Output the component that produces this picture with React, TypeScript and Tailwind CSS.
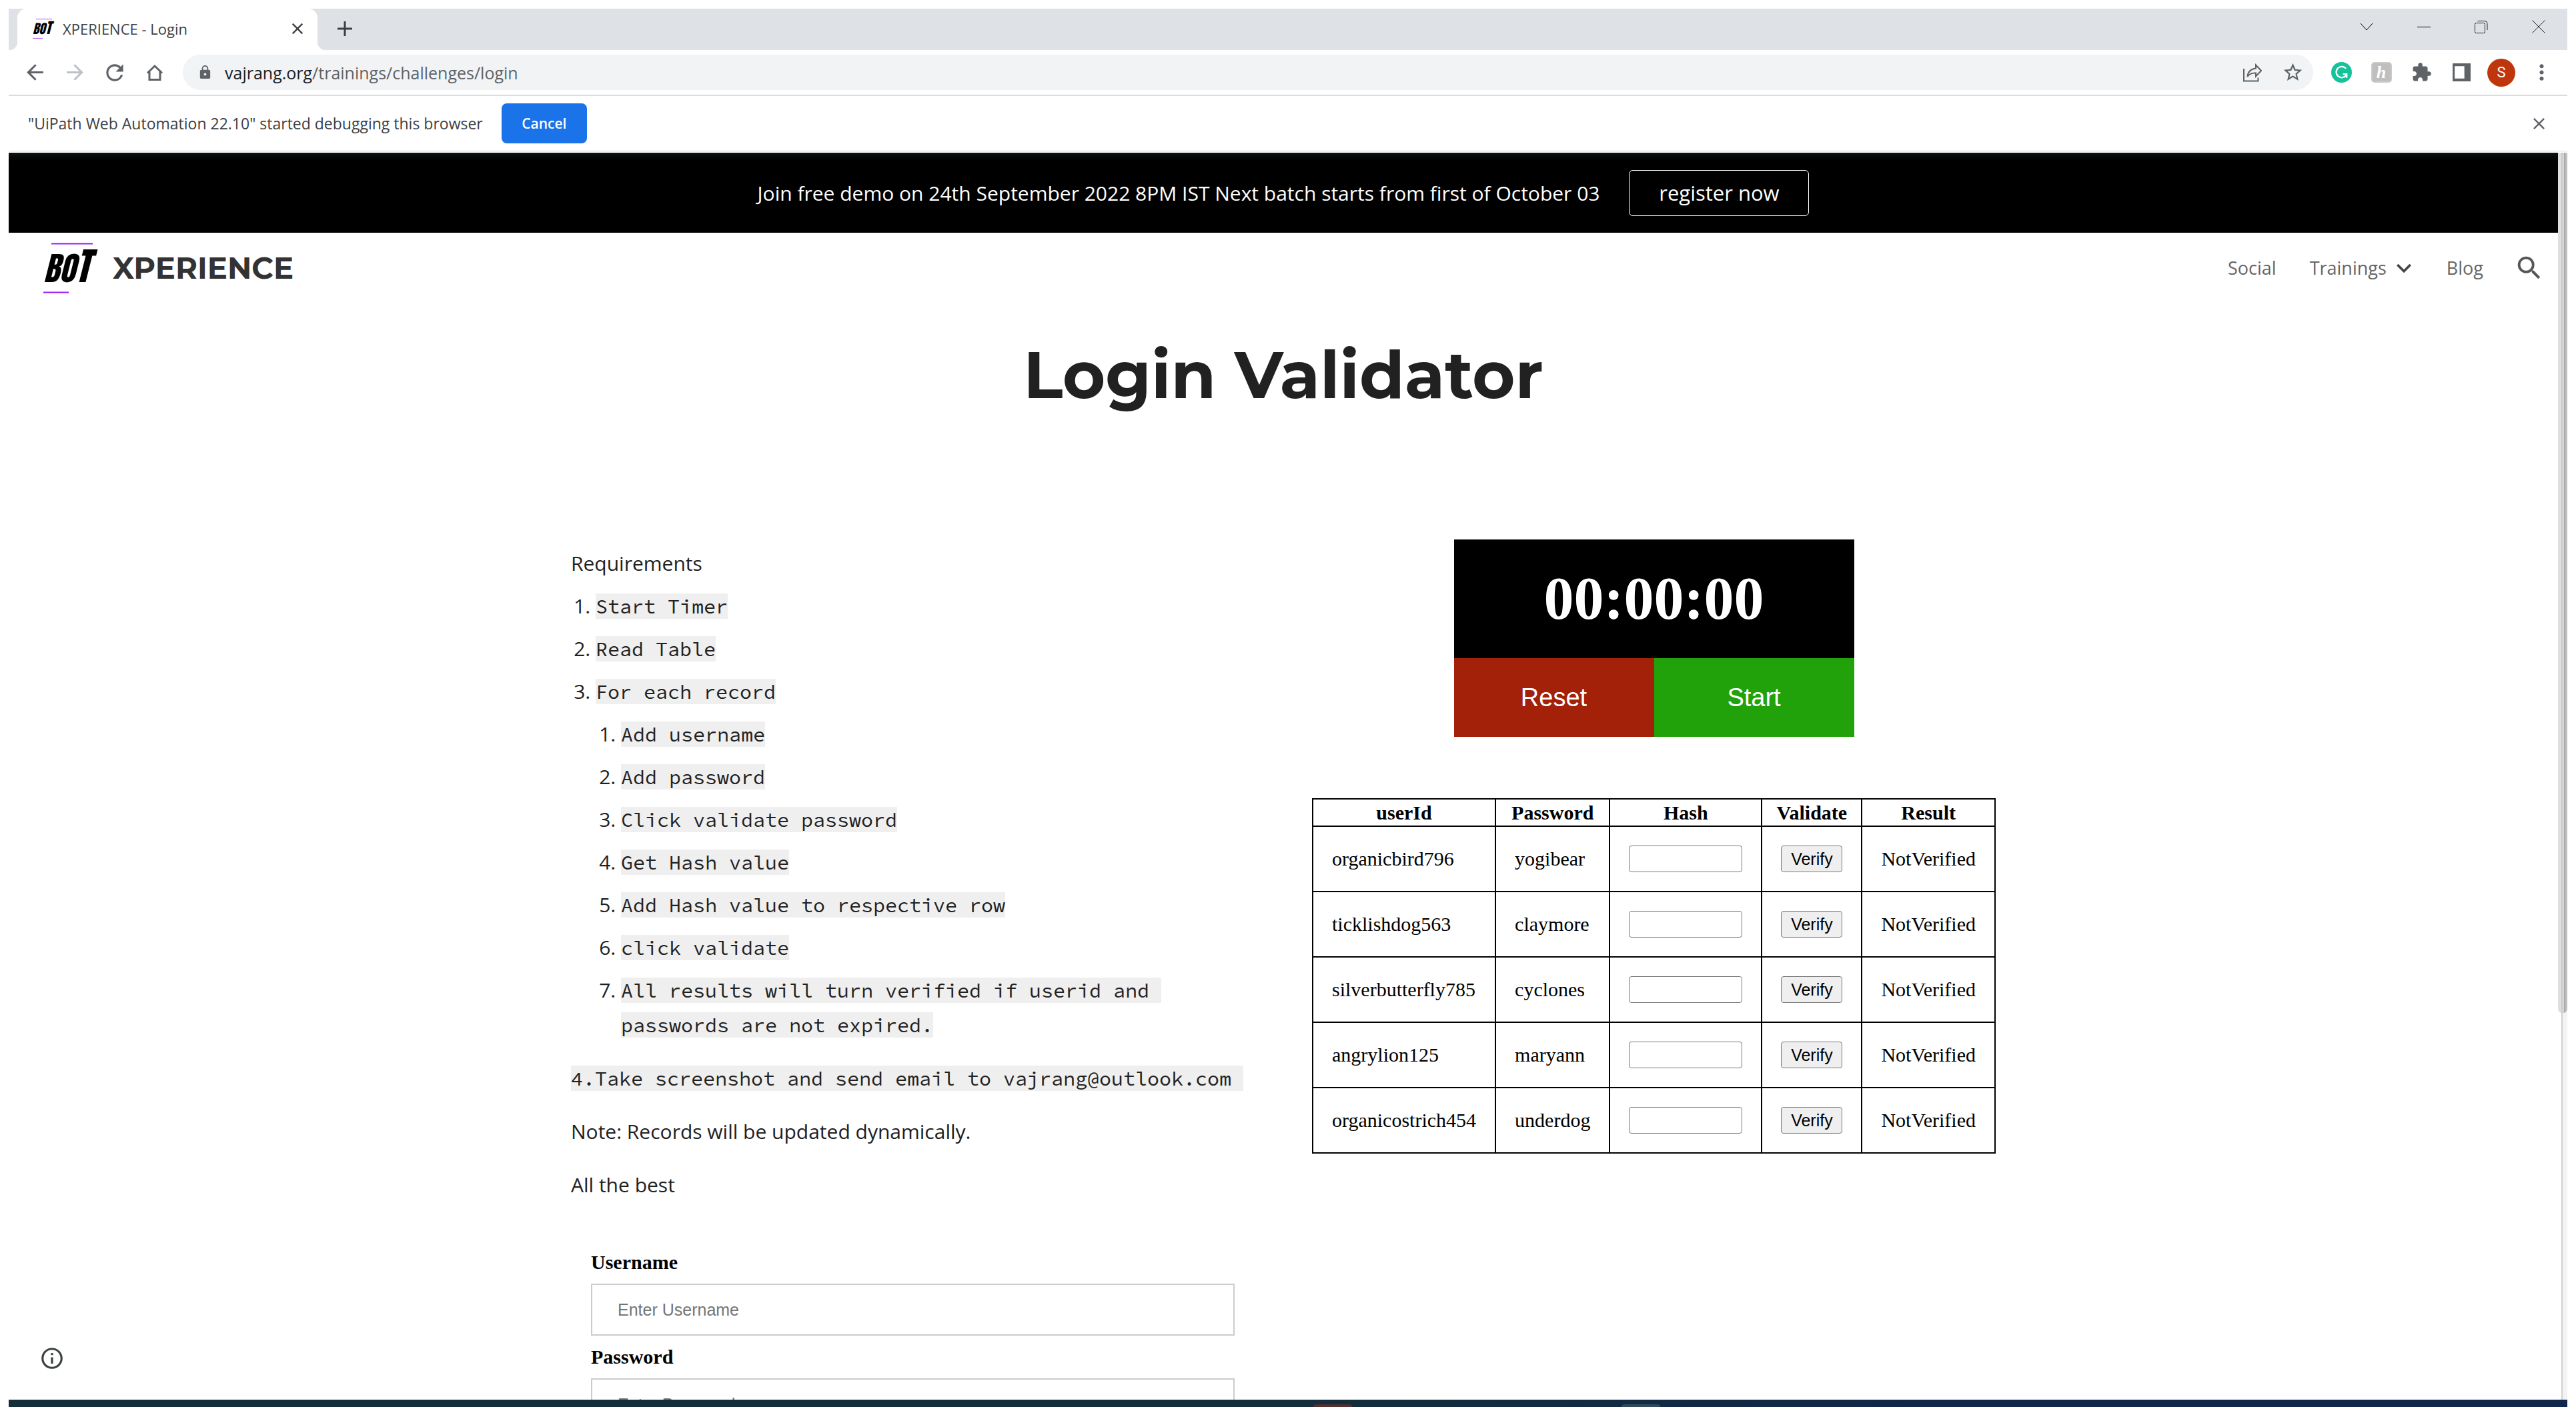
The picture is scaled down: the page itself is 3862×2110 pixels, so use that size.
import { useState } from "react";
import type { ReactNode } from "react";
import {
  MdArrowBack,
  MdArrowForward,
  MdClose,
  MdExpandMore,
  MdExtension,
  MdInfoOutline,
  MdLock,
  MdMoreVert,
  MdRefresh,
  MdSearch,
  MdStarBorder,
} from "react-icons/md";

const sans = "font-['Open_Sans','Noto_Sans',sans-serif]";
const serif = "font-['Liberation_Serif','Times_New_Roman',serif]";
const arial = "font-['Liberation_Sans',Arial,sans-serif]";

const users = [
  { id: "organicbird796", password: "yogibear" },
  { id: "ticklishdog563", password: "claymore" },
  { id: "silverbutterfly785", password: "cyclones" },
  { id: "angrylion125", password: "maryann" },
  { id: "organicostrich454", password: "underdog" },
];

const recordSteps = [
  "Add username",
  "Add password",
  "Click validate password",
  "Get Hash value",
  "Add Hash value to respective row",
  "click validate",
  "All results will turn verified if userid and passwords are not expired.",
];

function BotLogo({ className }: { className: string }) {
  return (
    <svg viewBox="0 0 76 76" className={`overflow-visible ${className}`} role="img" aria-label="BOT">
      <path d="M12 1.5H74" stroke="#9a1bf5" strokeWidth="2" />
      <path d="M0 74.5H38" stroke="#9a1bf5" strokeWidth="2" />
      <text x="0" y="59" fontSize="49" fontFamily="Anton,'Roboto Condensed',sans-serif" fontStyle="italic" fill="#000">
        BO<tspan fontSize="57">T</tspan>
      </text>
    </svg>
  );
}

function IconButton({ label, wide, children }: { label: string; wide?: boolean; children: ReactNode }) {
  return (
    <button
      type="button"
      aria-label={label}
      className={`flex h-[53px] shrink-0 items-center justify-center text-[#5f6368] ${wide ? "w-[86px]" : "w-[60px]"}`}
    >
      {children}
    </button>
  );
}

function TabStrip() {
  return (
    <div className="flex h-[62px] shrink-0 bg-[#dee1e6]">
      <div className="relative ml-[13px] flex w-[450px] items-center rounded-t-[14px] bg-white pr-[16px] pb-[2px] pl-[23px]">
        <span className="absolute bottom-0 -left-[13px] size-[13px] bg-[radial-gradient(circle_at_0_0,transparent_13px,white_14px)]" />
        <span className="absolute -right-[13px] bottom-0 size-[13px] bg-[radial-gradient(circle_at_100%_0,transparent_13px,white_14px)]" />
        <BotLogo className="size-[30px]" />
        <span className="ml-[15px] flex-1 text-[22px] leading-[30px] text-[#3c4043]">XPERIENCE - Login</span>
        <button type="button" aria-label="Close tab" className="text-[#3c4043]">
          <MdClose size={28} />
        </button>
      </div>
      <button type="button" aria-label="New tab" className="ml-[30px] pb-[2px] text-[#3c4043]">
        <svg viewBox="0 0 22 22" className="size-[22px]">
          <path d="M11 1V21M1 11H21" stroke="currentColor" strokeWidth="3" strokeLinecap="round" />
        </svg>
      </button>
      <div className="ml-auto flex">
        <IconButton label="Search tabs" wide>
          <svg viewBox="0 0 20 20" className="size-[20px]" fill="none" stroke="#000">
            <path d="M1 5L10 15L19 5" />
          </svg>
        </IconButton>
        <IconButton label="Minimize" wide>
          <svg viewBox="0 0 20 20" className="size-[20px]" fill="none" stroke="#000">
            <path d="M0 10.500H20" />
          </svg>
        </IconButton>
        <IconButton label="Restore" wide>
          <svg viewBox="0 0 20 20" className="size-[20px]" fill="none" stroke="#222">
            <rect x="0.500" y="4.500" width="15" height="15" rx="2" />
            <path d="M4.500 1.500H15A4 4 0 0 1 19 5.500V15" />
          </svg>
        </IconButton>
        <IconButton label="Close window" wide>
          <svg viewBox="0 0 20 20" className="size-[20px]" fill="none" stroke="#222">
            <path d="M0.500 0.500L19.500 19.500M19.500 0.500L0.500 19.500" />
          </svg>
        </IconButton>
      </div>
    </div>
  );
}

function Toolbar() {
  return (
    <div className="flex h-[69px] shrink-0 items-center border-b-2 border-[#dadce0] px-[9px]">
      <IconButton label="Back">
        <MdArrowBack size={37} />
      </IconButton>
      <IconButton label="Forward">
        <MdArrowForward size={37} className="text-[#bdc1c6]" />
      </IconButton>
      <IconButton label="Reload">
        <MdRefresh size={38} />
      </IconButton>
      <IconButton label="Home">
        <svg viewBox="0 0 26 26" className="size-[26px]" fill="none" stroke="currentColor" strokeWidth="3">
          <path d="M2 13.500L13 3L24 13.500M5 11.500V23.500H21V11.500" />
        </svg>
      </IconButton>
      <div className="mx-[12px] flex h-[53px] flex-1 items-center rounded-full bg-[#f1f3f4] pr-[1px] pl-[22px]">
        <MdLock size={23} className="text-[#5f6368]" />
        <a href="#login" className="ml-[18px] flex-1 text-[25px] leading-[36px] text-[#5f6368]">
          <span className="text-[#202124]">vajrang.org</span>/trainings/challenges/login
        </a>
        <IconButton label="Share this page">
          <svg viewBox="0 0 28 28" className="size-[28px]" fill="none" stroke="currentColor" strokeWidth="2">
            <path d="M1 8V26.500H22.500V21.500" />
            <path d="M19 2.500L27 11L19 19.500V14.500C13 14 9 16 6.500 20C7 13 11 8.500 19 7.500Z" />
          </svg>
        </IconButton>
        <IconButton label="Bookmark this tab">
          <MdStarBorder size={33} />
        </IconButton>
      </div>
      <IconButton label="Grammarly">
        <svg viewBox="0 0 30 30" className="size-[31px]" fill="none">
          <circle cx="15" cy="15" r="15" fill="#15c39a" />
          <path d="M21.500 9.500A8 8 0 1 0 22 19M17 17.500H22.500V23" stroke="#fff" strokeWidth="2.200" />
        </svg>
      </IconButton>
      <IconButton label="Honey">
        <span className="flex size-[31px] items-center justify-center rounded-[5px] border-2 border-[#cbcbcb] bg-[#bfbfbf] font-['Liberation_Serif',serif] text-[26px] leading-none font-bold text-white italic">
          h
        </span>
      </IconButton>
      <IconButton label="Extensions">
        <MdExtension size={31} />
      </IconButton>
      <IconButton label="Side panel">
        <svg viewBox="0 0 26 26" className="size-[27px]">
          <path fill="currentColor" fillRule="evenodd" d="M0 0H26V26H0ZM3 4V22H17V4Z" />
        </svg>
      </IconButton>
      <IconButton label="Profile">
        <span className="flex size-[42px] items-center justify-center rounded-full bg-[#bf360c] font-[Roboto,sans-serif] text-[22px] leading-none text-white">
          S
        </span>
      </IconButton>
      <IconButton label="Menu">
        <MdMoreVert size={37} />
      </IconButton>
    </div>
  );
}

function DebugBar() {
  return (
    <div className="mb-[2px] flex h-[83px] shrink-0 items-center border-b border-[#dadce0] pr-[28px] pl-[29px]">
      <p className="text-[23px] leading-[34px] text-[#3c4043]">
        "UiPath Web Automation 22.10" started debugging this browser
      </p>
      <button
        type="button"
        className="ml-[28px] h-[60px] w-[128px] rounded-[8px] bg-[#1a73e8] text-[21px] leading-[30px] font-semibold text-white"
      >
        Cancel
      </button>
      <button type="button" aria-label="Dismiss" className="ml-auto text-[#5f6368]">
        <MdClose size={29} />
      </button>
    </div>
  );
}

function SiteHeader() {
  return (
    <header>
      <div className="flex h-[120px] items-center justify-center gap-[44px] bg-[linear-gradient(#0e1311,#000_12px)] text-[30px] leading-[45px] text-white">
        <p>Join free demo on 24th September 2022 8PM IST Next batch starts from first of October 03</p>
        <a
          href="#register"
          className="flex h-[69px] w-[270px] items-center justify-center rounded-[6px] border border-white text-[31px]"
        >
          register now
        </a>
      </div>
      <div className="flex h-[106px] items-center pr-[20px] pl-[52px]">
        <a href="#home" className="flex items-center gap-[28px]">
          <BotLogo className="size-[76px]" />
          <span className="font-[Montserrat,Inter,sans-serif] text-[45px] leading-[60px] font-bold text-[#333]">
            XPERIENCE
          </span>
        </a>
        <nav className="ml-auto flex items-center text-[27px] leading-[40px] text-[#666]">
          <a href="#social">Social</a>
          <a href="#trainings" className="ml-[50px] flex items-center gap-[4px]">
            Trainings
            <MdExpandMore size={44} className="text-[#444]" />
          </a>
          <a href="#blog" className="ml-[42px]">
            Blog
          </a>
          <button type="button" aria-label="Search" className="ml-[46px] text-[#555]">
            <MdSearch size={46} />
          </button>
        </nav>
      </div>
    </header>
  );
}

function Code({ children }: { children: ReactNode }) {
  return (
    <code className="bg-[#efefef] box-decoration-clone font-['Source_Code_Pro','Liberation_Mono',monospace] text-[30px] leading-[30px] whitespace-pre-wrap">
      {children}
    </code>
  );
}

function Requirements() {
  return (
    <div className="pt-[10px] text-[30px] leading-[52px] text-[#212121]">
      <p>Requirements</p>
      <ol className="mt-[12px] list-decimal space-y-[12px] pl-[37px]">
        <li>
          <Code>Start Timer</Code>
        </li>
        <li>
          <Code>Read Table</Code>
        </li>
        <li>
          <Code>For each record</Code>
          <ol className="mt-[12px] list-decimal space-y-[12px] pl-[38px]">
            {recordSteps.map((step) => (
              <li key={step}>
                <Code>{step}</Code>
              </li>
            ))}
          </ol>
        </li>
      </ol>
      <p className="mt-[28px]">
        <Code>{"4.Take screenshot and send email to vajrang@outlook.com "}</Code>
      </p>
      <p className="mt-[28px]">Note: Records will be updated dynamically.</p>
      <p className="mt-[28px]">All the best</p>
    </div>
  );
}

function LoginForm() {
  const field = `mt-[15px] mb-[15px] block h-[78px] w-full border-2 border-[#ccc] bg-white px-[38px] text-[25px] text-black placeholder:text-[#757575] ${arial}`;
  const label = `block text-[30px] leading-[34px] font-bold text-black ${serif}`;
  return (
    <form className="mt-[73px] px-[30px]">
      <label htmlFor="username" className={label}>
        Username
      </label>
      <input id="username" type="text" placeholder="Enter Username" className={field} />
      <label htmlFor="password" className={label}>
        Password
      </label>
      <input id="password" type="password" placeholder="Enter Password" className={field} />
    </form>
  );
}

function Timer() {
  return (
    <div className="mx-auto w-[600px]">
      <div
        className={`flex h-[178px] items-center justify-center bg-black text-[90px] leading-[100px] font-bold text-white ${serif}`}
      >
        00:00:00
      </div>
      <div className={`grid h-[118px] grid-cols-2 text-[38px] leading-[44px] text-white ${arial}`}>
        <button type="button" className="bg-[#a32109]">
          Reset
        </button>
        <button type="button" className="bg-[#22a20a]">
          Start
        </button>
      </div>
    </div>
  );
}

function UserTable() {
  const [hashes, setHashes] = useState<Record<string, string>>({});
  const head = "border-2 border-black p-[2px] leading-[35px] font-bold";
  const cell = "border-2 border-black p-[28px] leading-[40px]";
  return (
    <table className={`mx-auto mt-[92px] border-collapse text-[30px] text-black ${serif}`}>
      <thead>
        <tr>
          {["userId", "Password", "Hash", "Validate", "Result"].map((title) => (
            <th key={title} className={head}>
              {title}
            </th>
          ))}
        </tr>
      </thead>
      <tbody>
        {users.map((user) => (
          <tr key={user.id}>
            <td className={cell}>{user.id}</td>
            <td className={cell}>{user.password}</td>
            <td className={cell}>
              <input
                type="text"
                aria-label={`Hash for ${user.id}`}
                value={hashes[user.id] ?? ""}
                onChange={(event) => setHashes({ ...hashes, [user.id]: event.target.value })}
                className={`block h-[40px] w-[170px] rounded-[4px] border border-[#767676] bg-white px-[4px] text-[25px] ${arial}`}
              />
            </td>
            <td className={cell}>
              <button
                type="button"
                className={`block h-[40px] w-[92px] rounded-[4px] border border-[#767676] bg-[#efefef] text-[25px] leading-[30px] ${arial}`}
              >
                Verify
              </button>
            </td>
            <td className={cell}>NotVerified</td>
          </tr>
        ))}
      </tbody>
    </table>
  );
}

function Scrollbar() {
  return (
    <div className="flex w-[14px] shrink-0 justify-end">
      <div className="relative h-full w-[9px] border-l-2 border-[#d0d0d0] bg-[#f3f3f3]">
        <span className="absolute top-0 right-0 h-[69%] w-[14px] rounded-b-[6px] bg-[linear-gradient(to_right,#dfdfdf_5px,#cacaca_5px_7px,#d8d8d8_7px_9px,#a9a9a9_9px_11px,#c0c0c0_11px)]" />
      </div>
    </div>
  );
}

function Taskbar() {
  return (
    <div className="flex h-[11px] shrink-0 items-end gap-[404px] bg-[linear-gradient(to_right,#142e3a_50%,#10264a_75%)] pl-[51%]">
      <span className="h-[4px] w-[58px] rounded-t-[4px] bg-[#532f2f]" />
      <span className="h-[4px] w-[58px] rounded-t-[4px] bg-[#33495a]" />
    </div>
  );
}

export default function App() {
  return (
    <div className={`flex h-screen flex-col bg-white px-[13px] pt-[13px] ${sans}`}>
      <TabStrip />
      <Toolbar />
      <DebugBar />
      <div className="relative flex min-h-0 flex-1 overflow-hidden">
        <div className="min-w-0 flex-1 overflow-hidden">
          <SiteHeader />
          <main>
            <h1 className="mt-[47px] text-center font-[Montserrat,Inter,sans-serif] text-[98px] leading-[120px] font-bold text-[#212121]">
              Login Validator
            </h1>
            <div className="mx-auto mt-[187px] grid max-w-[2136px] grid-cols-2 gap-[86px]">
              <section>
                <Requirements />
                <LoginForm />
              </section>
              <section>
                <Timer />
                <UserTable />
              </section>
            </div>
          </main>
        </div>
        <Scrollbar />
        <button type="button" aria-label="Site information" className="absolute bottom-[43px] left-[46px] text-[#3c4043]">
          <MdInfoOutline size={38} />
        </button>
      </div>
      <Taskbar />
    </div>
  );
}
